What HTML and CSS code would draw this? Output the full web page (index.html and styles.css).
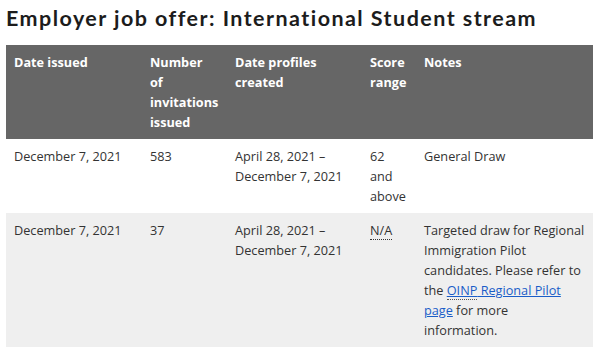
FILE: index.html
```html
<!DOCTYPE html>
<html lang="en">
<head>
  <meta charset="UTF-8" />
  <title>Employer job offer: International Student stream</title>
  <link rel="stylesheet" href="styles.css">
</head>
<body>
  <div class="container">
    <h2 class="stream-title">Employer job offer: International Student stream</h2>

    <table class="draws">
      <thead>
        <tr>
          <th class="col-issued">Date issued</th>
          <th class="col-number">Number of invitations issued</th>
          <th class="col-created">Date profiles created</th>
          <th class="col-score">Score range</th>
          <th class="col-notes">Notes</th>
        </tr>
      </thead>
      <tbody>
        <tr>
          <td>December 7, 2021</td>
          <td>583</td>
          <td>April 28, 2021 – December 7, 2021</td>
          <td>62 and above</td>
          <td class="notes">General Draw</td>
        </tr>
        <tr class="alt">
          <td>December 7, 2021</td>
          <td>37</td>
          <td>April 28, 2021 – December 7, 2021</td>
          <td><abbr title="Not applicable">N/A</abbr></td>
          <td class="notes">Targeted draw for Regional Immigration Pilot candidates. Please refer to the <a href="#"><abbr title="Ontario Immigrant Nominee Program">OINP</abbr> Regional Pilot page</a> for more information.</td>
        </tr>
      </tbody>
    </table>
  </div>
</body>
</html>
```

FILE: styles.css
```css
body {
  margin: 0;
  padding: 0;
  background-color: #fff;
  font-family: 'Open Sans', sans-serif;
  font-size: 12.7px;
  color: #333;
}

.container {
  padding: 0 6px;
}

.stream-title {
  font-family: Lato, 'Open Sans', sans-serif;
  font-weight: 700;
  font-size: 21.5px;
  letter-spacing: 1.45px;
  color: #1c1c1c;
  margin: 3px 0 12px;
  line-height: 30px;
}

.draws {
  width: 587px;
  border-collapse: collapse;
  table-layout: fixed;
}

.draws th,
.draws td {
  box-sizing: border-box;
  text-align: left;
  vertical-align: top;
  padding: 7px 8px;
  line-height: 20px;
}

.draws th {
  background-color: #666;
  color: #fff;
  font-weight: 700;
}

.draws .col-issued { width: 136px; }
.draws .col-number { width: 85px; padding-right: 14px; }
.draws .col-created { width: 135px; }
.draws .col-score { width: 54px; }
.draws .col-notes { width: auto; }

.draws td.notes {
  padding-right: 8.6px;
}

.draws tr.alt td {
  background-color: #efefef;
}

.draws abbr {
  text-decoration: none;
  border-bottom: 1px dotted #333;
}

.draws a {
  color: #1a5dc8;
  text-decoration: underline;
}

.draws a abbr {
  border-bottom-color: #555;
}
```
